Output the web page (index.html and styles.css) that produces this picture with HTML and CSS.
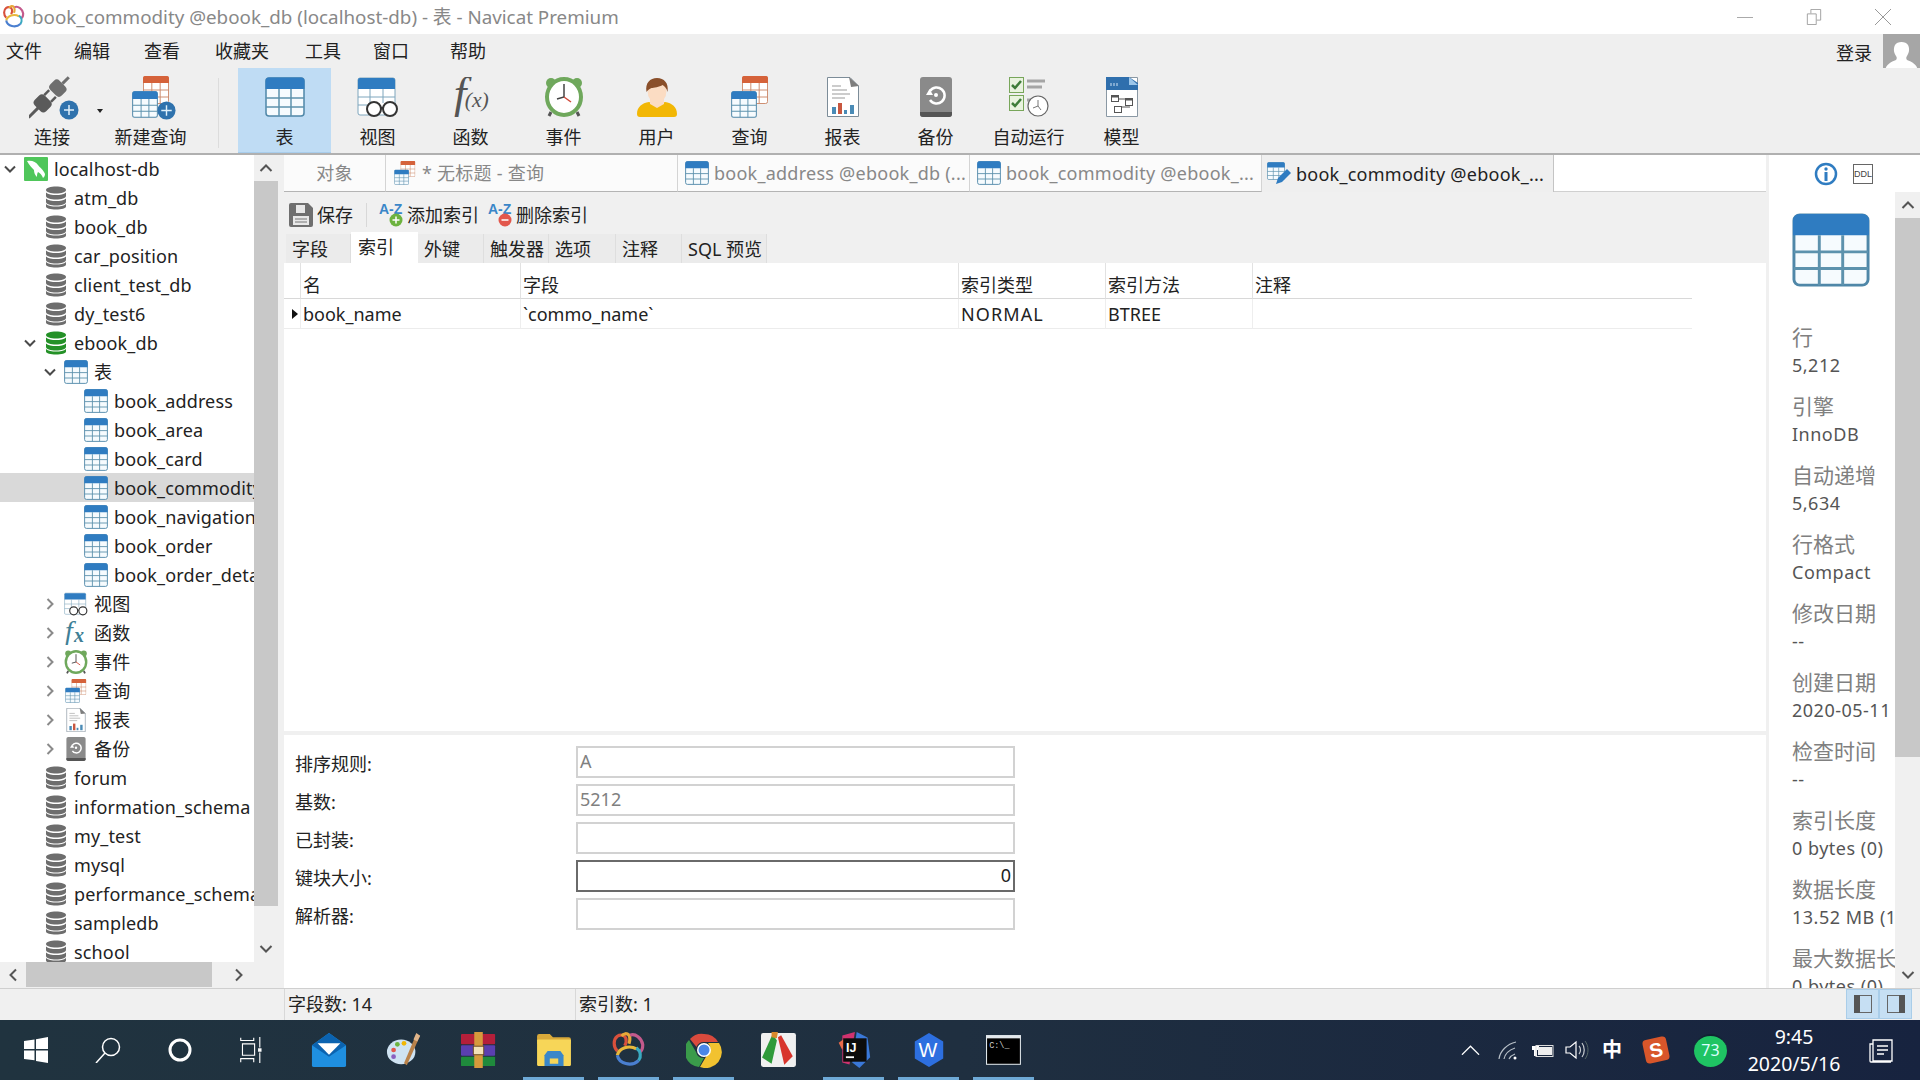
FILE: index.html
```html
<!DOCTYPE html>
<html lang="zh">
<head>
<meta charset="utf-8">
<title>Navicat Premium</title>
<link rel="stylesheet" href="styles.css">
</head>
<body>
<svg class="defs" xmlns="http://www.w3.org/2000/svg">
  <symbol id="tbl" viewBox="0 0 40 40" preserveAspectRatio="none">
    <rect x="1" y="1" width="38" height="38" rx="3" fill="#f6fbfe" stroke="#4f87a8" stroke-width="1.5"/>
    <path d="M.5 12V4A3.500 3.500 0 0 1 4 .5h32A3.500 3.500 0 0 1 39.500 4v8z" fill="#2f7cc1"/>
    <path d="M14 12v27M26 12v27M1 21h38M1 30h38" stroke="#5d92ad" stroke-width="1.500" fill="none"/>
  </symbol>
  <symbol id="tblo" viewBox="0 0 28 28" preserveAspectRatio="none">
    <rect x=".5" y=".5" width="27" height="27" rx="2" fill="#fff" stroke="#cc8a6c"/>
    <path d="M0 7V2a2 2 0 0 1 2-2h24a2 2 0 0 1 2 2v5z" fill="#d5623a"/>
    <path d="M9.500 7v20M18.500 7v20M0 14h28M0 21h28" stroke="#cc8a6c" fill="none"/>
  </symbol>
  <symbol id="qry" viewBox="0 0 38 42">
    <use href="#tblo" x="11" y="0" width="26" height="28"/>
    <use href="#tbl" x="0" y="15" width="26" height="27"/>
  </symbol>
  <symbol id="view" viewBox="0 0 42 40">
    <rect x="1" y="1" width="37" height="37" rx="2" fill="#fff" stroke="#7ea6bd"/>
    <path d="M1 12V3a2 2 0 0 1 2-2h33a2 2 0 0 1 2 2v9z" fill="#2f7cc1"/>
    <path d="M13 12v14M26 12v14M1 20h37M1 28h10" stroke="#7ea6bd" fill="none"/>
    <circle cx="17" cy="32" r="7" fill="#fff" stroke="#333" stroke-width="2"/>
    <circle cx="33" cy="32" r="7" fill="#fff" stroke="#333" stroke-width="2"/>
    <path d="M24 31h2" stroke="#333" stroke-width="2"/>
  </symbol>
  <symbol id="fx" viewBox="0 0 44 44">
    <text x="3" y="35" font-family="Liberation Serif" font-style="italic" font-size="50" fill="#555">f</text>
    <text x="15" y="33" font-family="Liberation Serif" font-style="italic" font-size="24" fill="#555">(x)</text>
  </symbol>
  <symbol id="fxs" viewBox="0 0 24 24">
    <text x="1" y="19" font-family="Liberation Serif" font-style="italic" font-size="28" fill="#3f7f96">f</text>
    <text x="10" y="21" font-family="Liberation Serif" font-style="italic" font-weight="700" font-size="20" fill="#3f7f96">x</text>
  </symbol>
  <symbol id="clock" viewBox="0 0 40 40">
    <circle cx="7" cy="6" r="5" fill="#6fa85c"/><circle cx="33" cy="6" r="5" fill="#6fa85c"/>
    <path d="M7 35l-2 4M33 35l2 4" stroke="#555" stroke-width="3"/>
    <ellipse cx="20" cy="20" rx="17" ry="18" fill="#fff" stroke="#6fa85c" stroke-width="4"/>
    <path d="M20 7v13l-7 2" stroke="#444" stroke-width="1.500" fill="none"/>
    <path d="M20 20l7 5" stroke="#d0493a" stroke-width="1.500"/>
  </symbol>
  <symbol id="user" viewBox="0 0 40 40">
    <path d="M0 37c0-7 5-11 12-12l8 3 8-3c7 1 12 5 12 12 0 2-1 3-3 3H3c-2 0-3-1-3-3z" fill="#f2b705"/>
    <path d="M13 22h14v5l-7 4-7-4z" fill="#fbdcc3"/>
    <ellipse cx="20" cy="14" rx="9.500" ry="12" fill="#fbdcc3"/>
    <path d="M9.500 15C8 6 13 1 20 1s12 5 10.500 14c-1-4-3-6-5-7-3 2-9 3-11 3-2 1-4 2-5 4z" fill="#8a4f2a"/>
  </symbol>
  <symbol id="report" viewBox="0 0 32 40">
    <path d="M.5.500H23L31.500 9v30.500H.5z" fill="#fff" stroke="#7c8c98"/>
    <path d="M22 0l10 9-8 1z" fill="#7d7d7d"/>
    <path d="M5 9h9M5 13h15M5 17h18M5 21h13" stroke="#999" fill="none"/>
    <rect x="5" y="30" width="4" height="7" fill="#4a8bb6"/><rect x="11" y="26" width="4" height="11" fill="#c8573f"/>
    <rect x="17" y="33" width="3" height="4" fill="#4a8bb6"/><rect x="23" y="28" width="4" height="9" fill="#4a8bb6"/>
  </symbol>
  <symbol id="backup" viewBox="0 0 32 40">
    <rect width="32" height="40" rx="3" fill="#8a8a8a"/>
    <path d="M0 35h32v2a3 3 0 0 1-3 3H3a3 3 0 0 1-3-3z" fill="#555"/>
    <path d="M10 14a8 8 0 1 1 0 9" fill="none" stroke="#fff" stroke-width="2.500"/>
    <path d="M6 18h7l-3.500-6z" fill="#fff"/>
    <circle cx="16" cy="18" r="2" fill="#fff"/>
  </symbol>
  <symbol id="auto" viewBox="0 0 40 40">
    <rect x=".5" y=".5" width="14" height="15" fill="#e9f3df" stroke="#78a65a"/>
    <rect x=".5" y="18.500" width="14" height="15" fill="#e9f3df" stroke="#78a65a"/>
    <path d="M3 8l3 3 6-7M3 26l3 3 6-7" stroke="#3f7d3a" stroke-width="2.500" fill="none"/>
    <path d="M18 4h18M18 10h15M18 23h5" stroke="#a5a5a5" stroke-width="3" fill="none"/>
    <circle cx="29" cy="29" r="10" fill="#fff" stroke="#666" stroke-width="1.200"/>
    <path d="M29 23v6l-5 2M29 29l3 4" stroke="#777" fill="none"/>
  </symbol>
  <symbol id="model" viewBox="0 0 32 40">
    <path d="M.5.500h31v39H.5z" fill="#fff" stroke="#8a98a4"/>
    <path d="M0 0h23l9 6v7H0z" fill="#2f6fad"/>
    <path d="M23 0l9 8h-9z" fill="#9cc6ea"/>
    <path d="M5 6v3M8 6v3M11 6v3" stroke="#cfe3f5"/>
    <path d="M12 22h8v6M14 30h10" stroke="#555" fill="none"/>
    <rect x="5.500" y="18.500" width="7" height="6" fill="#fff" stroke="#555"/><rect x="5.500" y="18.500" width="7" height="2" fill="#555"/>
    <rect x="19.500" y="21.500" width="7" height="7" fill="#fff" stroke="#555"/><rect x="19.500" y="21.500" width="7" height="2" fill="#555"/>
    <rect x="8.500" y="29.500" width="7" height="6" fill="#fff" stroke="#555"/>
  </symbol>
  <symbol id="plug" viewBox="0 0 50 44">
    <g transform="rotate(-45 20 21)">
      <rect x="-9" y="19.500" width="14" height="3" fill="#5a5a5a"/>
      <rect x="4" y="13" width="14" height="16" rx="4" fill="#5a5a5a"/>
      <rect x="18" y="15" width="7" height="2.500" fill="#5a5a5a"/><rect x="18" y="24.500" width="7" height="2.500" fill="#5a5a5a"/>
      <rect x="26" y="13" width="13" height="16" rx="4" fill="#6e6e6e"/>
      <rect x="39" y="19.500" width="9" height="3" fill="#6e6e6e"/>
    </g>
    <circle cx="40" cy="34" r="9.500" fill="#2f72ad"/>
    <path d="M40 29v10M35 34h10" stroke="#dff0fb" stroke-width="1.500"/>
  </symbol>
  <symbol id="plus" viewBox="0 0 20 20">
    <circle cx="10" cy="10" r="9.500" fill="#2f72ad"/>
    <path d="M10 4.500v11M4.500 10h11" stroke="#dff0fb" stroke-width="1.500"/>
  </symbol>
  <symbol id="db" viewBox="0 0 24 24">
    <g fill="#6d6d6d">
      <path d="M2 4c0-2 4.500-3.500 10-3.500S22 2 22 4s-4.500 3.500-10 3.500S2 6 2 4z"/>
      <path d="M2 6.500C4 8.500 8 9 12 9s8-.5 10-2.500V10c0 2-4.500 3.500-10 3.500S2 12 2 10z"/>
      <path d="M2 12.500c2 2 6 2.500 10 2.500s8-.5 10-2.500V16c0 2-4.500 3.500-10 3.500S2 18 2 16z"/>
      <path d="M2 18c2 2 6 2.500 10 2.500S20 20 22 18v2.500c0 2-4.500 3-10 3s-10-1-10-3z"/>
    </g>
  </symbol>
  <symbol id="dbg" viewBox="0 0 24 24">
    <g fill="#249127">
      <path d="M2 4c0-2 4.500-3.500 10-3.500S22 2 22 4s-4.500 3.500-10 3.500S2 6 2 4z"/>
      <path d="M2 6.500C4 8.500 8 9 12 9s8-.5 10-2.500V10c0 2-4.500 3.500-10 3.500S2 12 2 10z"/>
      <path d="M2 12.500c2 2 6 2.500 10 2.500s8-.5 10-2.500V16c0 2-4.500 3.500-10 3.500S2 18 2 16z"/>
      <path d="M2 18c2 2 6 2.500 10 2.500S20 20 22 18v2.500c0 2-4.500 3-10 3s-10-1-10-3z"/>
    </g>
  </symbol>
  <symbol id="conn" viewBox="0 0 24 24">
    <rect width="24" height="24" rx="1" fill="#4fc65a"/>
    <path d="M3 4c5-1 9 1 11 4 2 3 5 4 7 9 0 2-1 3-2 4-1-3-3-5-5-6-1 2-1 3-1 5-2-2-3-4-3-7C8 11 5 8 3 4z" fill="#fff"/>
  </symbol>
  <symbol id="down" viewBox="0 0 14 14"><path d="M2 4.500l5 5 5-5" fill="none" stroke="#4a4a4a" stroke-width="2"/></symbol>
  <symbol id="right" viewBox="0 0 14 14"><path d="M4.500 2l5 5-5 5" fill="none" stroke="#8a8a8a" stroke-width="2"/></symbol>
  <symbol id="sup" viewBox="0 0 14 14"><path d="M1.500 10L7 4.500 12.500 10" fill="none" stroke="#555" stroke-width="2"/></symbol>
  <symbol id="sdown" viewBox="0 0 14 14"><path d="M1.500 4L7 9.500 12.500 4" fill="none" stroke="#555" stroke-width="2"/></symbol>
  <symbol id="sleft" viewBox="0 0 14 14"><path d="M10 1.500L4.500 7l5.500 5.500" fill="none" stroke="#555" stroke-width="2"/></symbol>
  <symbol id="sright" viewBox="0 0 14 14"><path d="M4 1.500L9.500 7 4 12.500" fill="none" stroke="#555" stroke-width="2"/></symbol>
  <symbol id="save" viewBox="0 0 24 24">
    <path d="M0 2a2 2 0 0 1 2-2h17l5 5v17a2 2 0 0 1-2 2H2a2 2 0 0 1-2-2z" fill="#6f6f6f"/>
    <rect x="7" y="2" width="9" height="8" fill="#e8e8e8"/>
    <rect x="4" y="13" width="16" height="9" fill="#e8e8e8"/>
    <path d="M6 16h12M6 19h12" stroke="#777"/>
  </symbol>
  <symbol id="edit" viewBox="0 0 24 24">
    <use href="#tbl" width="18" height="18"/>
    <path d="M9 22l2-6 9-9 4 4-9 9z" fill="#2f7cc1"/>
  </symbol>
  <symbol id="logo" viewBox="0 0 34 34">
    <path d="M6 18C2 14 2 7 6 4c3-2 7-1 8 2 1 3 0 5-1 7" fill="none" stroke="#d8503c" stroke-width="3"/>
    <path d="M10 4c2-3 5-3 7-1 1 2 1 5 0 8" fill="none" stroke="#e8a838" stroke-width="3"/>
    <path d="M18 3c5-2 11 3 12 9 0 3-1 6-3 7" fill="none" stroke="#c45a8c" stroke-width="3"/>
    <path d="M6 22a11.500 9.500 0 0 1 18-6" fill="none" stroke="#e8b83c" stroke-width="3"/>
    <path d="M24 15a11.500 9.500 0 0 1 2 12" fill="none" stroke="#3aa9c0" stroke-width="3"/>
    <path d="M26 27a11.500 9.500 0 0 1-20-5" fill="none" stroke="#4a7fd0" stroke-width="3"/>
  </symbol>
</svg>

<header class="title">
  <svg class="i-logo"><use href="#logo"/></svg>
  <span class="title-text">book_commodity @ebook_db (localhost-db) - 表 - Navicat Premium</span>
  <div class="win">
    <svg class="win-i" viewBox="0 0 16 16"><path d="M0 8.500h16" stroke="#aaa"/></svg>
    <svg class="win-i" viewBox="0 0 16 18"><path d="M.5 5.500h10v12H.5zM4.500 5V.5h11v12H11" fill="none" stroke="#999"/></svg>
    <svg class="win-i" viewBox="0 0 16 16"><path d="M0 0l16 16M16 0L0 16" stroke="#999"/></svg>
  </div>
</header>

<nav class="menu">
  <div class="menu-items">
    <span>文件</span><span>编辑</span><span>查看</span><span>收藏夹</span><span>工具</span><span>窗口</span><span>帮助</span>
  </div>
  <div class="login">
    <span>登录</span>
    <svg class="avatar" viewBox="0 0 37 37"><rect width="37" height="37" fill="#a6a6a6"/><path d="M2 37c1-7 6-9 11-11 1-1 1-3 0-4-2-3-3-7-1-11 2-4 11-4 13 0 2 4 1 8-1 11-1 1-1 3 0 4 5 2 10 4 11 11z" fill="#fff"/></svg>
  </div>
</nav>

<section class="toolbar">
  <div class="tool t-conn"><svg class="ico ico-plug"><use href="#plug"/></svg><span>连接</span></div>
  <i class="drop"></i>
  <div class="tool"><div class="stack"><svg class="ico ico-q"><use href="#qry"/></svg><svg class="badge"><use href="#plus"/></svg></div><span>新建查询</span></div>
  <i class="tool-sep"></i>
  <div class="tool on"><svg class="ico"><use href="#tbl"/></svg><span>表</span></div>
  <div class="tool"><svg class="ico ico-w"><use href="#view"/></svg><span>视图</span></div>
  <div class="tool"><svg class="ico ico-w"><use href="#fx"/></svg><span>函数</span></div>
  <div class="tool"><svg class="ico"><use href="#clock"/></svg><span>事件</span></div>
  <div class="tool"><svg class="ico"><use href="#user"/></svg><span>用户</span></div>
  <div class="tool"><svg class="ico ico-q"><use href="#qry"/></svg><span>查询</span></div>
  <div class="tool"><svg class="ico"><use href="#report"/></svg><span>报表</span></div>
  <div class="tool"><svg class="ico"><use href="#backup"/></svg><span>备份</span></div>
  <div class="tool"><svg class="ico ico-w"><use href="#auto"/></svg><span>自动运行</span></div>
  <div class="tool"><svg class="ico"><use href="#model"/></svg><span>模型</span></div>
</section>

<div class="work">
  <aside class="side">
    <div class="side-top">
      <ul class="tree">
        <li class="row l0"><svg class="chev"><use href="#down"/></svg><svg class="ti"><use href="#conn"/></svg><span>localhost-db</span></li>
        <li class="row l1"><b class="chev"></b><svg class="ti"><use href="#db"/></svg><span>atm_db</span></li>
        <li class="row l1"><b class="chev"></b><svg class="ti"><use href="#db"/></svg><span>book_db</span></li>
        <li class="row l1"><b class="chev"></b><svg class="ti"><use href="#db"/></svg><span>car_position</span></li>
        <li class="row l1"><b class="chev"></b><svg class="ti"><use href="#db"/></svg><span>client_test_db</span></li>
        <li class="row l1"><b class="chev"></b><svg class="ti"><use href="#db"/></svg><span>dy_test6</span></li>
        <li class="row l1"><svg class="chev"><use href="#down"/></svg><svg class="ti"><use href="#dbg"/></svg><span>ebook_db</span></li>
        <li class="row l2"><svg class="chev"><use href="#down"/></svg><svg class="ti"><use href="#tbl"/></svg><span>表</span></li>
        <li class="row l3"><b class="chev"></b><svg class="ti"><use href="#tbl"/></svg><span>book_address</span></li>
        <li class="row l3"><b class="chev"></b><svg class="ti"><use href="#tbl"/></svg><span>book_area</span></li>
        <li class="row l3"><b class="chev"></b><svg class="ti"><use href="#tbl"/></svg><span>book_card</span></li>
        <li class="row l3 sel"><b class="chev"></b><svg class="ti"><use href="#tbl"/></svg><span>book_commodity</span></li>
        <li class="row l3"><b class="chev"></b><svg class="ti"><use href="#tbl"/></svg><span>book_navigation</span></li>
        <li class="row l3"><b class="chev"></b><svg class="ti"><use href="#tbl"/></svg><span>book_order</span></li>
        <li class="row l3"><b class="chev"></b><svg class="ti"><use href="#tbl"/></svg><span>book_order_detail</span></li>
        <li class="row l2"><svg class="chev"><use href="#right"/></svg><svg class="ti"><use href="#view"/></svg><span>视图</span></li>
        <li class="row l2"><svg class="chev"><use href="#right"/></svg><svg class="ti"><use href="#fxs"/></svg><span>函数</span></li>
        <li class="row l2"><svg class="chev"><use href="#right"/></svg><svg class="ti"><use href="#clock"/></svg><span>事件</span></li>
        <li class="row l2"><svg class="chev"><use href="#right"/></svg><svg class="ti"><use href="#qry"/></svg><span>查询</span></li>
        <li class="row l2"><svg class="chev"><use href="#right"/></svg><svg class="ti"><use href="#report"/></svg><span>报表</span></li>
        <li class="row l2"><svg class="chev"><use href="#right"/></svg><svg class="ti"><use href="#backup"/></svg><span>备份</span></li>
        <li class="row l1"><b class="chev"></b><svg class="ti"><use href="#db"/></svg><span>forum</span></li>
        <li class="row l1"><b class="chev"></b><svg class="ti"><use href="#db"/></svg><span>information_schema</span></li>
        <li class="row l1"><b class="chev"></b><svg class="ti"><use href="#db"/></svg><span>my_test</span></li>
        <li class="row l1"><b class="chev"></b><svg class="ti"><use href="#db"/></svg><span>mysql</span></li>
        <li class="row l1"><b class="chev"></b><svg class="ti"><use href="#db"/></svg><span>performance_schema</span></li>
        <li class="row l1"><b class="chev"></b><svg class="ti"><use href="#db"/></svg><span>sampledb</span></li>
        <li class="row l1"><b class="chev"></b><svg class="ti"><use href="#db"/></svg><span>school</span></li>
      </ul>
      <div class="vbar vbar-side">
        <div class="sb-btn"><svg class="arr"><use href="#sup"/></svg></div>
        <div class="thumb thumb-side"></div>
        <div class="sb-fill"></div>
        <div class="sb-btn"><svg class="arr"><use href="#sdown"/></svg></div>
      </div>
    </div>
    <div class="hbar">
      <div class="hb-btn"><svg class="arr"><use href="#sleft"/></svg></div>
      <div class="hthumb"></div>
      <div class="sb-fill"></div>
      <div class="hb-btn"><svg class="arr"><use href="#sright"/></svg></div>
    </div>
  </aside>

  <main class="main">
    <div class="tabs">
      <div class="tab tab-obj">对象</div>
      <div class="tab"><svg class="tab-i"><use href="#qry"/></svg><span>* 无标题 - 查询</span></div>
      <div class="tab"><svg class="tab-i"><use href="#tbl"/></svg><span>book_address @ebook_db (...</span></div>
      <div class="tab"><svg class="tab-i"><use href="#tbl"/></svg><span>book_commodity @ebook_...</span></div>
      <div class="tab tab-on"><svg class="tab-i"><use href="#edit"/></svg><span>book_commodity @ebook_...</span></div>
      <div class="tab-rest"></div>
    </div>
    <div class="acts">
      <div class="act act-save"><svg class="act-i"><use href="#save"/></svg><span>保存</span></div>
      <i class="act-sep"></i>
      <div class="act act-add">
        <svg class="act-i" viewBox="0 0 24 24"><text x="-1" y="11" font-family="Liberation Sans" font-size="14" font-weight="700" fill="#3a86c8">A-Z</text><circle cx="16" cy="17" r="6.500" fill="#6db33f"/><path d="M16 13.500v7M12.500 17h7" stroke="#fff" stroke-width="1.500"/></svg>
        <span>添加索引</span>
      </div>
      <div class="act">
        <svg class="act-i" viewBox="0 0 24 24"><text x="-1" y="11" font-family="Liberation Sans" font-size="14" font-weight="700" fill="#3a86c8">A-Z</text><circle cx="16" cy="17" r="6.500" fill="#e2574c"/><path d="M12.500 17h7" stroke="#fff" stroke-width="1.500"/></svg>
        <span>删除索引</span>
      </div>
    </div>
    <div class="subtabs">
      <div class="st">字段</div><div class="st st-on">索引</div><div class="st">外键</div><div class="st">触发器</div><div class="st">选项</div><div class="st">注释</div><div class="st">SQL 预览</div>
    </div>
    <div class="grid-wrap">
      <div class="grid">
        <div class="th th-mark"></div><div class="th">名</div><div class="th">字段</div><div class="th">索引类型</div><div class="th">索引方法</div><div class="th">注释</div>
        <div class="td td-mark"><i class="tri"></i></div><div class="td">book_name</div><div class="td">`commo_name`</div><div class="td td-wide">NORMAL</div><div class="td">BTREE</div><div class="td"></div>
      </div>
    </div>
    <div class="split"></div>
    <div class="form">
      <label>排序规则:</label><div class="inp dim">A</div>
      <label>基数:</label><div class="inp dim">5212</div>
      <label>已封装:</label><div class="inp"></div>
      <label>键块大小:</label><div class="inp focus">0</div>
      <label>解析器:</label><div class="inp"></div>
    </div>
  </main>

  <aside class="panel">
    <div class="panel-top">
      <svg class="info" viewBox="0 0 24 24"><circle cx="12" cy="12" r="10" fill="#fff" stroke="#2f7cc1" stroke-width="2.500"/><circle cx="12" cy="7" r="1.700" fill="#2f7cc1"/><rect x="10.500" y="10" width="3" height="9" fill="#2f7cc1"/></svg>
      <span class="ddl">DDL</span>
    </div>
    <div class="panel-body">
      <div class="meta">
        <svg class="meta-i"><use href="#tbl"/></svg>
        <dl><dt>行</dt><dd>5,212</dd></dl>
        <dl><dt>引擎</dt><dd>InnoDB</dd></dl>
        <dl><dt>自动递增</dt><dd>5,634</dd></dl>
        <dl><dt>行格式</dt><dd>Compact</dd></dl>
        <dl><dt>修改日期</dt><dd>--</dd></dl>
        <dl><dt>创建日期</dt><dd>2020-05-11 10:32:08</dd></dl>
        <dl><dt>检查时间</dt><dd>--</dd></dl>
        <dl><dt>索引长度</dt><dd>0 bytes (0)</dd></dl>
        <dl><dt>数据长度</dt><dd>13.52 MB (14,172,160)</dd></dl>
        <dl><dt>最大数据长度</dt><dd>0 bytes (0)</dd></dl>
      </div>
      <div class="vbar vbar-right">
        <div class="sb-btn"><svg class="arr"><use href="#sup"/></svg></div>
        <div class="thumb thumb-right"></div>
        <div class="sb-fill"></div>
        <div class="sb-btn"><svg class="arr"><use href="#sdown"/></svg></div>
      </div>
    </div>
  </aside>
</div>

<footer class="status">
  <div class="st-a">字段数: 14</div>
  <div class="st-b">索引数: 1</div>
  <div class="toggles">
    <div class="tog"><svg viewBox="0 0 18 18"><rect x=".5" y=".5" width="17" height="17" fill="none" stroke="#666"/><rect width="6" height="18" fill="#555"/></svg></div>
    <div class="tog"><svg viewBox="0 0 18 18"><rect x=".5" y=".5" width="17" height="17" fill="none" stroke="#666"/><rect x="12" width="6" height="18" fill="#555"/></svg></div>
  </div>
</footer>

<div class="taskbar">
  <div class="tb-sys">
    <div class="tb-cell"><svg class="s26" viewBox="0 0 24 26"><path d="M0 4l10.500-1.500V12H0zM12 2.300L24 0v12H12zM0 13.500h10.500v9.800L0 22zM12 13.500h12V26l-12-2z" fill="#fff"/></svg></div>
    <div class="tb-cell"><svg class="s26" viewBox="0 0 26 26"><circle cx="16" cy="10" r="8.500" fill="none" stroke="#fff" stroke-width="1.500"/><path d="M10 16L1 26" stroke="#fff" stroke-width="1.500"/></svg></div>
    <div class="tb-cell"><svg class="s26" viewBox="0 0 26 26"><circle cx="13" cy="13" r="10" fill="none" stroke="#fff" stroke-width="3"/></svg></div>
    <div class="tb-cell"><svg class="s26" viewBox="0 0 26 30"><path d="M0 1v3h15V1M2 8h14v13H2zM0 29v-4h15v4M22 0v12M22 18v12" fill="none" stroke="#fff" stroke-width="1.300"/><rect x="20" y="13" width="4" height="4" fill="#fff"/></svg></div>
  </div>
  <div class="tb-apps">
    <div class="app"><svg class="s38" viewBox="0 0 38 38"><path d="M1 14L19 1l18 13v21a2 2 0 0 1-2 2H3a2 2 0 0 1-2-2z" fill="#1f8fe0"/><path d="M1 14L19 1l18 13-18 12z" fill="#0b63b0"/><path d="M7 12h24L19 24z" fill="#fff"/></svg></div>
    <div class="app"><svg class="s38" viewBox="0 0 38 38"><ellipse cx="16" cy="21" rx="15" ry="13" fill="#cfe3f2"/><circle cx="8" cy="19" r="2.500" fill="#e2574c"/><circle cx="12" cy="13" r="2.500" fill="#6db33f"/><circle cx="19" cy="12" r="2.500" fill="#f2b705"/><circle cx="8" cy="26" r="2.500" fill="#8a5fbf"/><path d="M32 2l4 2-14 31-3-2z" fill="#b9824a"/><path d="M32 1l4 3-3 6-4-2z" fill="#e0b58a"/></svg></div>
    <div class="app"><svg class="s38" viewBox="0 0 38 38"><rect y="2" width="36" height="11" rx="1" fill="#b41f3a"/><rect y="14" width="36" height="11" rx="1" fill="#5b3fb0"/><rect y="26" width="36" height="10" rx="1" fill="#1f8a3c"/><rect x="14" y="0" width="9" height="38" fill="#d69a3c"/><rect x="13" y="15" width="11" height="9" fill="#f2e2b8" stroke="#6b4a1f"/></svg></div>
    <div class="app run"><svg class="s38" viewBox="0 0 34 34"><path d="M1 4a2 2 0 0 1 2-2h10l3 3h15a2 2 0 0 1 2 2v4H1z" fill="#d9a93a"/><rect x="1" y="7" width="32" height="25" rx="1" fill="#f7d658"/><path d="M8 32V22l3-4h12l3 4v10z" fill="#3a87c8"/><rect x="13" y="25" width="8" height="5" fill="#f7d658"/></svg></div>
    <div class="app run"><svg class="s38" viewBox="0 0 34 34"><use href="#logo"/></svg></div>
    <div class="app run"><svg class="s38" viewBox="0 0 36 36"><path d="M18 2a16 16 0 0 1 14 8H18a8 8 0 0 0-7.500 5L4 7A16 16 0 0 1 18 2z" fill="#d94a3d"/><path d="M3 8l7 12a8 8 0 0 0 8 6l-5 9A16 16 0 0 1 3 8z" fill="#3a9b4a"/><path d="M33 11a16 16 0 0 1-19 24l7-12a8 8 0 0 0 1-12z" fill="#f2c230"/><circle cx="18" cy="18" r="7" fill="#fff"/><circle cx="18" cy="18" r="5.500" fill="#4a86e8"/></svg></div>
    <div class="app"><svg class="s38" viewBox="0 0 34 34"><rect y="1" width="33" height="32" rx="2" fill="#f0f0f0"/><path d="M11 2L1 24l9 6 5-22z" fill="#2f9a3a"/><path d="M16 5l3-2 11 20-8 8z" fill="#d8342c"/><path d="M10 0h6l-1 6-5-1z" fill="#d98a2c"/></svg></div>
    <div class="app run"><svg class="s38" viewBox="0 0 38 40"><path d="M6 4L20 0l-6 36-8-2z" fill="#d0326f"/><path d="M22 0l12 6 3 22-12 12-8-6z" fill="#3a78d8"/><path d="M6 20L2 12l8-6z" fill="#e86a4a"/><rect x="7" y="7" width="26" height="26" fill="#0c0c0c"/><text x="10" y="22" font-family="Liberation Sans" font-weight="700" font-size="14" fill="#fff">IJ</text><rect x="10" y="27" width="9" height="2" fill="#fff"/></svg></div>
    <div class="app run"><svg class="s38" viewBox="0 0 34 38"><path d="M17 1l15 9v18l-15 9-15-9V10z" fill="#2d6fe0"/><text x="6" y="26" font-family="Liberation Sans" font-size="21" fill="#fff">W</text></svg></div>
    <div class="app run"><svg class="s38" viewBox="0 0 34 34"><rect x=".5" y="3.500" width="32" height="27" fill="#000" stroke="#dfe6ea"/><rect y="3" width="33" height="3" fill="#e3e8ec"/><text x="3" y="15" font-family="Liberation Mono" font-size="8" fill="#ccc">C:\_</text></svg></div>
  </div>
  <div class="tray">
    <svg class="t-caret" viewBox="0 0 20 10"><path d="M1 10l9-9 9 9" fill="none" stroke="#fff" stroke-width="1.300"/></svg>
    <svg class="t-wifi" viewBox="0 0 20 20"><path d="M1 19C2 11 9 4 18 2M6 19c1-5 5-9 11-11M11 19c1-2 3-4 6-5" fill="none" stroke="#b8c0c8" stroke-width="1.200"/><circle cx="17" cy="18" r="1.500" fill="#fff"/></svg>
    <svg class="t-batt" viewBox="0 0 24 16"><path d="M4 0v4M7 0v4M2 4h7v4H7v6H4V8H2z" fill="#fff"/><rect x="6" y="3.500" width="17" height="11" fill="none" stroke="#ddd"/><rect x="8" y="5" width="14" height="8" fill="#eee"/></svg>
    <svg class="t-vol" viewBox="0 0 24 20"><path d="M1 7h4l6-5v16l-6-5H1z" fill="none" stroke="#fff" stroke-width="1.200"/><path d="M14 6c2 2 2 6 0 8M17 3c3 4 3 10 0 14" fill="none" stroke="#c8ccd0" stroke-width="1.200"/><path d="M20 1c4 5 4 13 0 18" fill="none" stroke="#566" stroke-width="1"/></svg>
    <span class="t-zh">中</span>
    <span class="t-sogou">S</span>
    <span class="t-score">73</span>
    <div class="clock"><span>9:45</span><span>2020/5/16</span></div>
    <svg class="t-note" viewBox="0 0 24 26"><path d="M4 3h19v21H4zM4 7H1v17q0 1 1 1h20M8 9h11M8 13h11M8 17h7" fill="none" stroke="#fff" stroke-width="1.300"/></svg>
  </div>
</div>
</body>
</html>
```

FILE: styles.css
```css
* { box-sizing: border-box; }
html, body { margin: 0; padding: 0; }
body {
  width: 1920px;
  height: 1080px;
  overflow: hidden;
  display: flex;
  flex-direction: column;
  background: #f0f0f0;
  color: #222;
  font-family: "Noto Sans", "Noto Sans CJK SC", sans-serif;
  font-size: 18px;
  line-height: 24px;
}
.defs { display: none; }

/* title */
.title { height: 34px; background: #fff; display: flex; align-items: center; padding-left: 2px; flex: none; }
.i-logo { width: 24px; height: 24px; margin-right: 6px; }
.title-text { color: #888; white-space: nowrap; font-size: 18.8px; }
.win { margin-left: auto; display: flex; align-items: center; gap: 53px; padding-right: 29px; }
.win-i { width: 16px; height: 16px; display: block; }

/* menu */
.menu { height: 34px; background: #efefef; display: flex; align-items: flex-start; justify-content: space-between; flex: none; }
.menu-items { display: grid; grid-template-columns: 68px 70px 71px 90px 68px 77px auto; padding: 5px 0 0 6px; }
.login { display: flex; gap: 11px; padding-top: 7px; align-items: flex-start; }
.avatar { width: 37px; height: 37px; margin-top: -7px; display: block; }

/* toolbar */
.toolbar { height: 87px; background: #efefef; border-bottom: 2px solid #b0b0b0; display: flex; padding-left: 7px; flex: none; }
.tool { width: 93px; height: 85px; display: flex; flex-direction: column; align-items: center; padding-top: 9px; }
.tool span { display: block; margin-top: 8px; white-space: nowrap; color: #222; }
.t-conn { width: 90px; }
.tool.on { background: #bfdcf4; border-bottom: 1px solid #a8cdec; }
.ico { width: 40px; height: 40px; display: block; flex: none; }
.ico-w { width: 44px; }
.ico-q { width: 40px; height: 42px; margin-top: -1px; margin-bottom: -1px; }
.ico-plug { width: 50px; height: 44px; margin: -1px 0 -3px 3px; }
.stack { position: relative; height: 40px; }
.badge { position: absolute; width: 19px; height: 19px; right: -5px; bottom: -3px; }
.drop { width: 0; height: 0; flex: none; align-self: flex-start; margin: 41px 1px 0 0; border: 3px solid transparent; border-top: 4px solid #222; border-bottom: 0; }
.tool-sep { width: 1px; height: 70px; flex: none; margin: 10px 19px 0 21px; background: #dcdcdc; }

/* workspace */
.work { height: 833px; flex: none; display: flex; background: #f0f0f0; }
.side { width: 278px; display: flex; flex-direction: column; flex: none; }
.side-top { flex: 1; min-height: 0; display: flex; }
.tree { width: 254px; height: 100%; margin: 0; padding: 0; list-style: none; overflow: hidden; background: #fff; flex: none; }
.row { height: 29px; display: flex; align-items: center; white-space: nowrap; overflow: hidden; color: #222; letter-spacing: .15px; }
.row:first-child { margin-top: -1px; }
.l0 { padding-left: 0; } .l1 { padding-left: 20px; } .l2 { padding-left: 40px; } .l3 { padding-left: 60px; }
.sel { background: #d9d9d9; }
.chev { width: 20px; height: 14px; flex: none; display: block; margin-right: 4px; }
.ti { width: 24px; height: 24px; margin-right: 6px; flex: none; display: block; }
.vbar { display: flex; flex-direction: column; background: #f0f0f0; flex: none; }
.vbar-side { width: 24px; }
.vbar-right { width: 25px; }
.sb-btn { height: 26px; display: flex; align-items: center; justify-content: center; flex: none; }
.arr { width: 14px; height: 14px; display: block; }
.thumb { background: #c8c8c8; flex: none; }
.thumb-side { height: 725px; }
.thumb-right { height: 539px; }
.sb-fill { flex: 1; }
.hbar { height: 26px; display: flex; flex: none; background: #f0f0f0; padding: 0 26px 1px 0; }
.hb-btn { width: 26px; display: flex; align-items: center; justify-content: center; flex: none; }
.hthumb { width: 186px; background: #c8c8c8; flex: none; }

/* main */
.main { width: 1482px; margin-left: 6px; display: flex; flex-direction: column; flex: none; }
.tabs { height: 37px; display: flex; background: #fff; flex: none; }
.tab { width: 292px; height: 37px; display: flex; align-items: center; padding-left: 7px; border-right: 1px solid #d4d4d4; border-bottom: 1px solid #b4b4b4; color: #888; white-space: nowrap; background: #fbfbfb; flex: none; overflow: hidden; letter-spacing: .25px; }
.tab-obj { width: 102px; justify-content: center; padding: 0; }
.tab-on { background: #efefef; color: #222; border-bottom: 0; border-right: 1px solid #c4c4c4; padding-left: 5px; }
.tab-rest { flex: 1; border-bottom: 1px solid #d0d0d0; }
.tab-i { width: 24px; height: 24px; margin-right: 5px; flex: none; display: block; }
.acts { height: 40px; display: flex; align-items: center; padding: 6px 0 0 5px; flex: none; }
.act { display: flex; align-items: center; }
.act-i { width: 24px; height: 24px; flex: none; display: block; overflow: visible; }
.act span { margin-left: 3px; white-space: nowrap; }
.act-save span { margin-left: 4px; }
.act-sep { width: 1px; height: 24px; background: #d8d8d8; margin: 0 13px; flex: none; }
.act-add { margin-right: 10px; }
.subtabs { height: 31px; display: grid; grid-template-columns: 65px 67px 66px 65px 67px 66px 85px; padding-left: 2px; justify-content: start; align-items: end; flex: none; }
.st { height: 29px; padding-left: 6px; line-height: 31px; background: #ebebeb; border-right: 1px solid #dedede; white-space: nowrap; }
.st-on { height: 31px; background: #fff; line-height: 31px; padding-left: 7px; border-right: 0; }
.grid-wrap { flex: 1; min-height: 0; background: #fff; }
.grid { display: grid; width: 1408px; grid-template-columns: 16px 220px 438px 147px 147px 440px; grid-template-rows: 36px 30px; }
.th { border-bottom: 1px solid #d8d8d8; border-left: 1px solid #e2e2e2; padding: 10px 0 0 2px; }
.th-mark { border-left: 0; }
.td { border-bottom: 1px solid #ececec; border-left: 1px solid #eeeeee; padding: 3px 0 0 2px; white-space: nowrap; }
.td-wide { letter-spacing: 1.1px; }
.td-mark { border-left: 0; display: flex; align-items: center; justify-content: flex-end; padding: 0 2px 0 0; }
.tri { width: 0; height: 0; border-left: 6px solid #111; border-top: 5px solid transparent; border-bottom: 5px solid transparent; }
.split { height: 4px; background: #f0f0f0; flex: none; }
.form { height: 253px; background: #fff; display: grid; grid-template-columns: 281px 439px; grid-auto-rows: 32px; row-gap: 6px; padding: 11px 0 0 11px; flex: none; }
.form label { line-height: 36px; color: #222; }
.inp { border: 2px solid #d2d2d2; padding: 0 2px; line-height: 26px; }
.dim { color: #808080; }
.focus { border-color: #6a6a6a; text-align: right; }

/* panel */
.panel { width: 151px; margin-left: 3px; flex: none; display: flex; flex-direction: column; background: #fff; }
.panel-top { height: 37px; display: flex; align-items: center; padding-left: 45px; flex: none; }
.info { width: 24px; height: 26px; margin-right: 15px; display: block; }
.ddl { width: 20px; height: 20px; border: 1px solid #666; font-family: "Liberation Sans", sans-serif; font-size: 9px; line-height: 18px; text-align: center; color: #444; }
.panel-body { flex: 1; min-height: 0; display: flex; }
.meta { width: 126px; overflow: hidden; padding: 21px 0 0 23px; white-space: nowrap; flex: none; }
.meta-i { width: 78px; height: 74px; display: block; margin-bottom: 36px; }
.meta dl { margin: 0 0 13px; }
.meta dt { color: #808080; line-height: 28px; font-size: 21px; }
.meta dd { margin: 0; color: #555; line-height: 28px; letter-spacing: .5px; }

/* status */
.status { height: 32px; background: #f0f0f0; border-top: 1px solid #cfcfcf; display: flex; align-items: stretch; flex: none; }
.st-a { width: 291px; margin-left: 284px; border-left: 1px solid #d8d8d8; padding: 3px 0 0 3px; }
.st-b { width: 400px; border-left: 1px solid #d8d8d8; padding: 3px 0 0 3px; }
.toggles { margin-left: auto; display: flex; margin-right: 8px; }
.tog { width: 33px; height: 30px; background: #c6dff3; border: 1px solid #a9cde9; display: flex; align-items: center; justify-content: center; }
.tog svg { width: 18px; height: 18px; display: block; }

/* taskbar */
.taskbar { height: 60px; flex: none; display: flex; align-items: stretch; background: linear-gradient(90deg, #20333f 0%, #1f2f40 50%, #17233f 100%); color: #fff; }
.tb-sys { display: grid; grid-template-columns: repeat(4, 72px); margin-right: 3px; }
.tb-cell { display: flex; align-items: center; justify-content: center; }
.s26 { width: 26px; height: 26px; display: block; }
.tb-apps { display: grid; grid-template-columns: repeat(10, 75px); }
.app { display: flex; align-items: center; justify-content: center; position: relative; }
.s38 { width: 36px; height: 36px; display: block; }
.run::after { content: ""; position: absolute; left: 7px; right: 7px; bottom: 0; height: 3px; background: #6ea9d6; }
.tray { margin-left: auto; display: flex; align-items: center; }
.t-caret { width: 19px; height: 10px; margin-right: 18px; }
.t-wifi { width: 20px; height: 20px; margin-right: 12px; }
.t-batt { width: 24px; height: 18px; margin-right: 11px; }
.t-vol { width: 24px; height: 20px; margin-right: 12px; }
.t-zh { font-weight: 700; font-size: 20px; width: 22px; margin-right: 21px; text-align: center; }
.t-sogou { width: 24px; height: 24px; background: #d8562a; border-radius: 4px; font-family: "Liberation Sans", sans-serif; font-weight: 700; font-size: 20px; line-height: 24px; text-align: center; color: #fff; margin-right: 26px; transform: rotate(-12deg); }
.t-score { width: 33px; height: 33px; border-radius: 50%; background: #1fc463; border-top: 2px solid #123; font-size: 16px; line-height: 28px; text-align: center; color: #dff; margin-right: 12px; }
.clock { width: 110px; display: flex; flex-direction: column; align-items: center; line-height: 27px; margin-right: 20px; font-size: 19.5px; }
.t-note { width: 24px; height: 26px; margin-right: 27px; }
```
